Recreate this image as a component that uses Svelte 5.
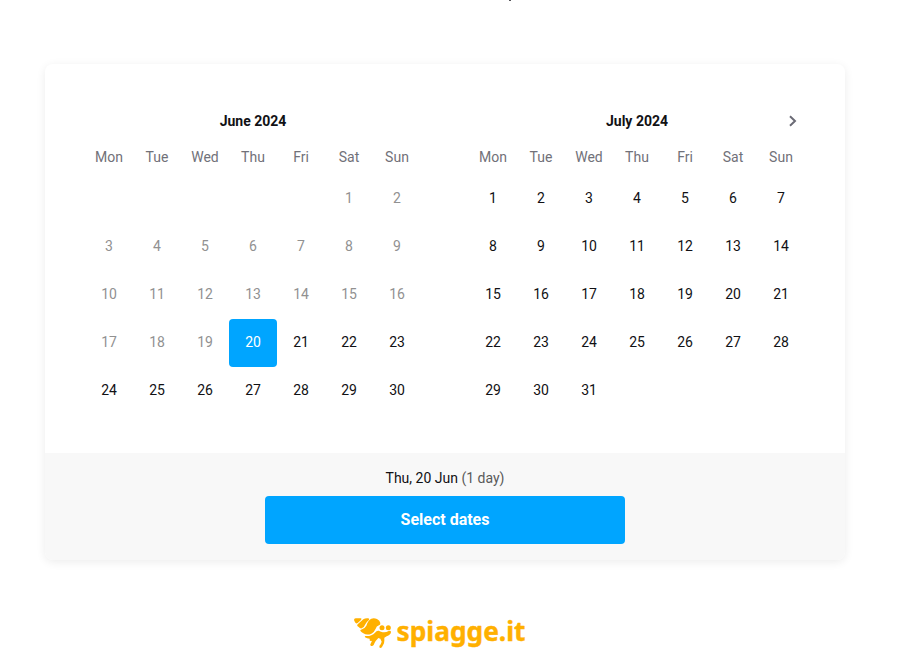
<script lang="ts">
const weekdays = ['Mon', 'Tue', 'Wed', 'Thu', 'Fri', 'Sat', 'Sun'];
const today = 20;

// offset = empty cells before the 1st (weeks start on Monday)
const months = [
    { name: 'June 2024', offset: 5, length: 30, firstActive: today },
    { name: 'July 2024', offset: 0, length: 31, firstActive: 1 }
];

let selected = $state({ month: 0, day: today });

let label = $derived(
    `${weekdays[(months[selected.month].offset + selected.day - 1) % 7]}, ${selected.day} ${months[selected.month].name.slice(0, 3)}`
);

function days(length: number) {
    return Array.from({ length }, (_, i) => i + 1);
}
</script>

<div class="page">
    <div class="tail"></div>
    <div class="card">
        <div class="months">
            {#each months as month, m (month.name)}
            <div class="month">
                <div class="heading">
                    {month.name}
                    {#if m === months.length - 1}
                    <button class="next" aria-label="Next month">
                        <svg width="10" height="12" viewBox="0 0 10 12">
                            <path d="M2 1.2 7 6 2 10.8" fill="none" stroke="currentColor" stroke-width="2" />
                        </svg>
                    </button>
                    {/if}
                </div>
                <div class="grid weekdays">
                    {#each weekdays as weekday (weekday)}
                    <div>{weekday}</div>
                    {/each}
                </div>
                <div class="grid">
                    {#each days(month.offset) as blank (blank)}
                    <div></div>
                    {/each}
                    {#each days(month.length) as day (day)}
                    <button
                        class="day"
                        class:selected={selected.month === m && selected.day === day}
                        disabled={day < month.firstActive}
                        onclick={() => (selected = { month: m, day })}
                        >{day}</button>
                    {/each}
                </div>
            </div>
            {/each}
        </div>
        <div class="footer">
            <div class="summary">{label} <span>(1 day)</span></div>
            <button class="submit">Select dates</button>
        </div>
    </div>
    <div class="logo">
        <svg width="42" height="40" viewBox="0 0 126 120">
            <g fill="#ffb000">
                <path d="M6 24Q6 18 13 19L26 19Q31 20 27 24L17 33Q12 36 9 31Z" />
                <path d="M17 37L34 22Q40 18 48 19Q54 20 50 25Q44 29 40 37Q37 46 29 49Q24 50 20 45L16 42Q15 39 17 37Z" />
                <path d="M27 53Q38 51 43 41Q48 25 58 20Q66 17 75 21Q84 26 85 33Q86 38 81 40Q73 42 71 50Q67 60 58 65Q45 71 34 64Q27 60 25 56Q25 53 27 53Z" />
                <path d="M41 72Q59 73 69 62Q74 55 80 56L87 59Q99 63 110 57Q116 54 117 60Q116 69 104 73L97 77L97 86L96 94L90 105Q86 110 82 106Q81 102 86 97L89 89L85 80L79 78L71 87Q68 92 65 99Q61 104 56 101Q53 98 57 93L60 86Q51 89 53 80Q45 80 39 76Q37 72 41 72Z" />
                <circle cx="90" cy="47" r="7.5" />
                <circle cx="109" cy="47" r="7.5" />
            </g>
        </svg>
        <svg width="136" height="40" viewBox="0 0 136 40">
            <text x="2.5" y="29" textLength="129" lengthAdjust="spacingAndGlyphs">spiagge.it</text>
        </svg>
    </div>
</div>

<style>
:global(body) {
    margin: 0;
    background: #fff;
    overflow: hidden;
}

* {
    box-sizing: border-box;
}

button {
    border: 0;
    padding: 0;
    background: none;
    font: inherit;
    color: inherit;
    cursor: pointer;
}

.page {
    height: 671px;
    font-family: Roboto, sans-serif;
    font-size: 14px;
    color: #111114;
}

.tail {
    width: 2px;
    height: 1px;
    margin: 0 0 63px 509px;
    background: #55555a;
}

.card {
    width: 800px;
    height: 496px;
    margin-left: 45px;
    border-radius: 8px;
    overflow: hidden;
    box-shadow: 0 2px 10px rgba(0, 0, 0, 0.08);
}

.months {
    display: flex;
    gap: 48px;
    height: 389px;
    padding: 41px 40px 0;
}

.month {
    width: 336px;
}

.heading {
    position: relative;
    height: 32px;
    line-height: 32px;
    text-align: center;
    font-weight: 700;
}

.next {
    position: absolute;
    top: 0;
    right: 0;
    width: 24px;
    height: 32px;
    display: flex;
    align-items: center;
    justify-content: center;
    color: #6b6b76;
}

.grid {
    display: grid;
    grid-template-columns: repeat(7, 48px);
    grid-auto-rows: 48px;
}

.weekdays {
    grid-auto-rows: 38px;
    line-height: 40px;
    text-align: center;
    color: #717179;
}

.day {
    padding-bottom: 2px;
    border-radius: 4px;
}

.day:disabled {
    color: #919191;
    cursor: default;
}

.day.selected {
    background: #00a5ff;
    color: #fff;
}

.footer {
    display: flex;
    flex-direction: column;
    align-items: center;
    height: 107px;
    padding-top: 15px;
    background: #f8f8f8;
}

.summary {
    height: 28px;
    line-height: 20px;
}

.summary span {
    color: #5a5a5a;
}

.submit {
    width: 360px;
    height: 48px;
    padding-bottom: 2px;
    border-radius: 4px;
    background: #00a5ff;
    color: #fff;
    font-size: 16px;
    font-weight: 700;
}

.logo {
    display: flex;
    margin: 52px 0 0 352px;
}

.logo text {
    font-family: "Noto Sans", sans-serif;
    font-size: 27px;
    font-weight: 700;
    fill: #ffb000;
    stroke: #ffb000;
    stroke-width: 0.4;
    stroke-linejoin: round;
}
</style>
